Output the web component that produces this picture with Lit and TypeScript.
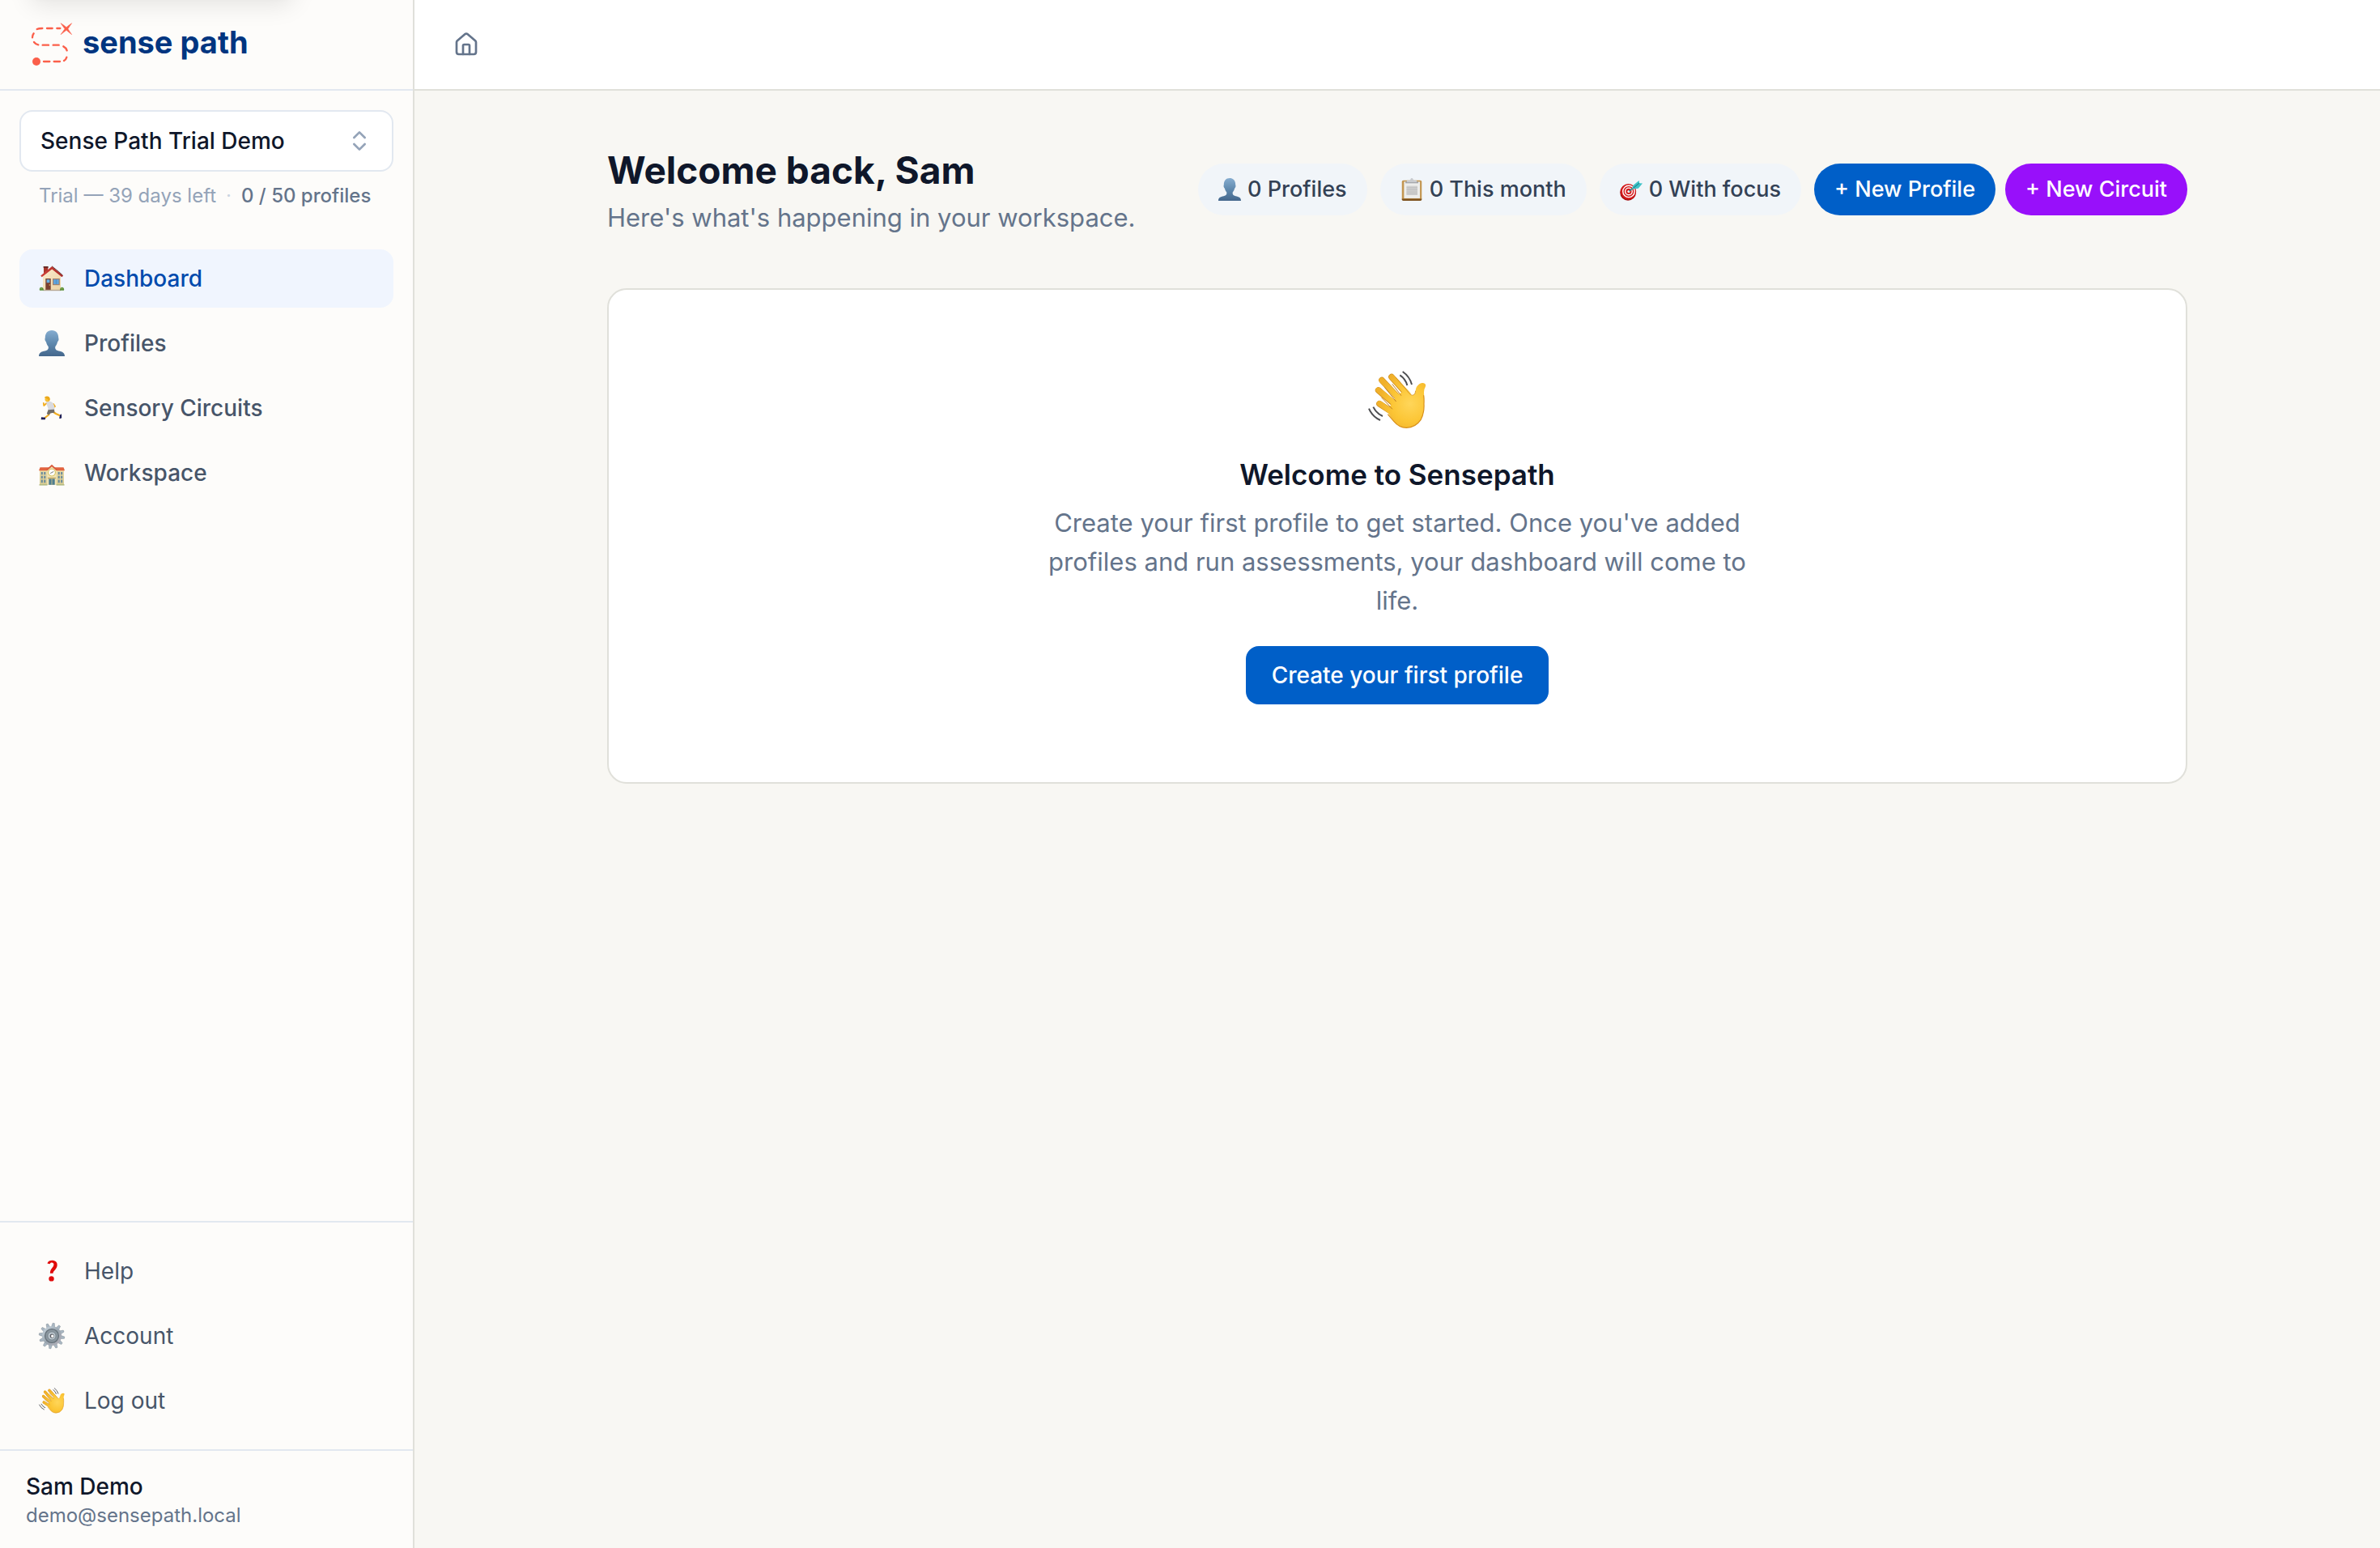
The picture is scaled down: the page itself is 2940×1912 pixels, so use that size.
import { LitElement, html, css, svg, nothing } from "lit";
import { customElement, property } from "lit/decorators.js";

const house = svg`
  <defs>
    <linearGradient id="wall" x1="0" y1="0" x2="1" y2="1"><stop offset="0" stop-color="#fbeccd"/><stop offset="1" stop-color="#ecd3a6"/></linearGradient>
    <linearGradient id="roof" x1="0" y1="0" x2="1" y2="0"><stop offset="0" stop-color="#cf4038"/><stop offset="1" stop-color="#a92a26"/></linearGradient>
  </defs>
  <path d="M6 1.500h5.300v4L6 10z" fill="#a8362c"/><path d="M5.600 1h6v1.700h-6z" fill="#5d2723"/>
  <path d="M16.200 3.500 5 13v17h22V13z" fill="url(#wall)"/>
  <path d="M16.200 1 2.200 12.500l1.500 1.700L16.200 4.600l12.300 9.600 1.500-1.700z" fill="url(#roof)"/>
  <path d="M16.200 .8 24.500 7.500 29.500 12" stroke="#4c2522" stroke-width=".8" fill="none"/>
  <rect x="8.300" y="16" width="6.400" height="14" fill="#7a4030"/><rect x="9.600" y="17.200" width="3.800" height="4" fill="#67aee0"/>
  <circle cx="13.300" cy="24" r=".7" fill="#e7c15c"/>
  <rect x="17" y="16" width="8.800" height="8.200" fill="#a57f66"/><rect x="18.100" y="17.100" width="6.600" height="6" fill="#5fa4dd"/>
  <path d="M21.400 17.100v6" stroke="#4b7fb2" stroke-width=".6"/>
  <rect x="5.500" y="29.800" width="21.500" height="1.400" fill="#b7a894"/>
  <path d="M1 30.800c-.8-2 .3-4 2-4 1.800 0 3 1.600 3 4zM26 30.800c0-2.400 1-4 2.700-4s3 2 2.300 4z" fill="#5d8f3a"/>
  <circle cx="2.800" cy="28.300" r=".9" fill="#86b455"/><circle cx="28.500" cy="28.300" r=".9" fill="#86b455"/>`;

const person = svg`
  <defs><linearGradient id="bust" x1="0" y1="0" x2="0" y2="1"><stop offset="0" stop-color="#86add0"/><stop offset=".5" stop-color="#5f89ae"/><stop offset="1" stop-color="#44678c"/></linearGradient></defs>
  <path d="M16 0c5.400 0 8.200 3.900 8.200 9 0 .9.500 1.400.300 2.600-.2 1.500-1 2.200-1.500 2.900-.6 2.700-1.600 4.100-2.700 5.400-.5 2.400.2 4.100 2.700 5 4 1.300 9 1.300 9 7.100H0c0-5.800 5-5.800 9-7.100 2.500-.9 3.200-2.600 2.700-5-1.100-1.300-2.100-2.700-2.700-5.400-.5-.7-1.300-1.400-1.500-2.900-.2-1.200.3-1.700.3-2.600C7.800 3.900 10.600 0 16 0z" fill="url(#bust)"/>`;

const runner = svg`
  <g fill="none" stroke-linecap="round" stroke-linejoin="round">
    <path d="M9.500 10 6.200 13 5.800 10M18 11l2 3-2.500 1.600" stroke="#f2ae22" stroke-width="1.800"/>
    <path d="M13.500 21 12 24.500 7.500 28M17.500 20.500 21 23l5.500 2.500" stroke="#f2ae22" stroke-width="2.200"/>
  </g>
  <path d="M3 27.200l5.200.6-.4 2.500H2.700zM26.200 24.500l1.800-1.200.2 5-2.400.9-.6-1z" fill="#1f2059"/>
  <path d="M12 17l7 .3.400 4.400-2.800.2-2.200.6-2.300 2-2.300-1.600z" fill="#706c68"/>
  <path d="M9 8.600c2.200-1.300 5.500-1 7.500.4 2 2 3 4.500 2.900 8.600l-7.400.7c-.6-2.600-2-5-3-9.700z" fill="#d9dadf"/>
  <circle cx="10.500" cy="5.200" r="3" fill="#f7bf37"/><path d="M6.800 3.200C8 .9 12.500 1.200 13.400 3.500c.6 1.800 0 3.300-1 4-.2-2.300-2.200-3.300-5.600-4.300z" fill="#eba819"/>`;

const school = svg`
  <defs><linearGradient id="brick" x1="0" y1="0" x2="0" y2="1"><stop offset="0" stop-color="#eadba6"/><stop offset="1" stop-color="#d8cc93"/></linearGradient></defs>
  <rect x="1" y="12.500" width="30" height="18" fill="url(#brick)"/>
  <path d="M1.500 9.300h29L32 13.300H0z" fill="#e2643f"/>
  <path d="M10.200 13 16 7.500 21.800 13v17.500H10.200z" fill="#f0e3b4"/><path d="M16 5.800 9.200 12l1.200 1.300L16 8.300l5.600 5L22.800 12z" fill="#d95a3b"/>
  <circle cx="16" cy="15.600" r="4.900" fill="#d6c25e"/><circle cx="16" cy="15.600" r="3.800" fill="#fff"/><path d="M16 15.600l2.300-1.200M16 15.600l-1.800 1" stroke="#555" stroke-width=".8"/>
  <path d="M2.800 15h2v3.200h-2zM6.300 15h2v3.200h-2zM23.700 15h2v3.200h-2zM27.200 15h2v3.200h-2zM2.800 19.800h2V23h-2zM6.300 19.800h2V23h-2zM23.700 19.800h2V23h-2zM27.200 19.800h2V23h-2zM2.800 24.600h2v3.600h-2zM6.300 24.600h2v3.600h-2zM23.700 24.600h2v3.600h-2zM27.200 24.600h2v3.600h-2z" fill="#65889c"/>
  <rect x="11" y="21.800" width="10" height="1.400" fill="#c2a55c"/><rect x="12.300" y="23.400" width="7.400" height="7.400" fill="#4f7d8f"/><path d="M16 23.400v7.400" stroke="#d9cb92" stroke-width=".8"/>
  <path d="M0.500 30.200h10v1.200h-10zM21.500 30.200h10v1.200h-10z" fill="#a3ad6b"/>`;

const question = svg`
  <path d="M10.400 6.500c1-3.300 4.200-4 6.800-3.700 3.800.4 6 2.900 5.400 6.600-.4 2.600-2 4.300-3.500 6-1 1.200-1.500 2-1.600 3.400h-3.600c-.1-2.600.6-4.200 2-6 1.300-1.700 2.400-2.800 2.500-4.700.1-1.600-.8-2.500-2.400-2.500-1.300 0-2 .5-2.500 1.600z" fill="#e00a0a"/>
  <circle cx="15.500" cy="25.400" r="3.200" fill="#e00a0a"/>`;

const teeth = Array.from({ length: 12 }, (_, i) => i * 30 + 8);
const gear = svg`
  <defs><linearGradient id="steel" x1="0" y1="0" x2="1" y2="1"><stop offset="0" stop-color="#cfdbe4"/><stop offset=".5" stop-color="#9aa6b0"/><stop offset="1" stop-color="#b5afb8"/></linearGradient></defs>
  ${teeth.map((a) => svg`<path d="M13.700 6l1.200-5.800h2.200l1.200 5.800z" fill="#a9b7c3" stroke="#75808a" stroke-width=".4" transform="rotate(${a} 16 16)"/>`)}
  <circle cx="16" cy="16" r="12" fill="url(#steel)"/>
  <circle cx="16" cy="16" r="8.400" fill="#8a969f" stroke="#67727b" stroke-width="1.400"/>
  <circle cx="16" cy="16" r="5" fill="#bcc7cf" stroke="#727d86" stroke-width=".8"/>
  <circle cx="16.200" cy="16" r="2.600" fill="#5a5c62"/><circle cx="16.700" cy="16.200" r="1.700" fill="#fafafa"/>`;

const wave = svg`
  <defs>
    <radialGradient id="palm" gradientUnits="userSpaceOnUse" cx="245" cy="205" r="120"><stop offset="0" stop-color="#ffd65a"/><stop offset=".55" stop-color="#fcc636"/><stop offset="1" stop-color="#f0b02a"/></radialGradient>
  </defs>
  <g fill="none" stroke="#d1901f" stroke-width="23" stroke-linecap="round"><path d="M177 107 236 172M141 119 202 184M128 156 186 206M132 206 184 240"/></g>
  <path d="M166 238 172 214 186 190 212 164 232 158Q248 178 258 174 266 170 266 158 267 142 280 133 292 126 301 132 305 137 302 144 297 152 297 164 298 172 297 206 299 240 285 266 266 294 232 295 205 295 186 272 174 256 162 236z" fill="url(#palm)"/>
  <g fill="none" stroke="url(#palm)" stroke-width="20" stroke-linecap="round"><path d="M178 107 238 172M141 119 206 188M128 155 192 208M132 205 190 246"/></g>
  <g fill="none" stroke="#c07f22" stroke-width="3" stroke-linecap="round"><path d="M180 134 212 175M152 146 193 197M140 183 179 225"/></g>
  <path d="M192 108 234 157Q248 178 258 174 266 170 266 158" fill="none" stroke="#d2921e" stroke-width="2.500"/>
  <path d="M296 176Q298 190 297 206 299 240 285 266 266 294 232 295 205 295 186 272L164 246" fill="none" stroke="#d8901c" stroke-width="3.500" stroke-linecap="round"/>
  <g fill="none" stroke="#4e4f52" stroke-width="6"><path d="M218 87Q244 105 252 135M208 100Q229 114 235 138M93 224Q106 254 135 267M109 218Q121 242 144 252"/></g>`;

const clipboard = svg`
  <rect x="2" y="3" width="28" height="28.500" rx="2" fill="#c39651"/><path d="M2 29h28v1a2 2 0 0 1-2 2H4a2 2 0 0 1-2-2z" fill="#7e5320"/>
  <rect x="5" y="5" width="22.500" height="23.500" fill="#ededeb"/><path d="M7 5h18v2.200H7z" fill="#9a9da2"/>
  <path d="M12.500 3c1 0 1.500-.8 1.700-1.600a1.900 1.900 0 0 1 3.600 0c.2.800.7 1.600 1.700 1.600h3.500v3H9V3z" fill="#c9cbce"/>
  <rect x="8.500" y="11" width="15.500" height="13" fill="#cfcfcf"/><path d="M8.500 13.500H24M8.500 16.500H24M8.500 19.500H24M8.500 22H24" stroke="#b5b5b5" stroke-width=".7"/>`;

const target = svg`
  <circle cx="11.500" cy="20.400" r="11.300" fill="#a30d10"/><circle cx="12" cy="19" r="11" fill="#d41a1c"/>
  <circle cx="12.500" cy="18.800" r="8.200" fill="none" stroke="#fff" stroke-width="1.600"/><circle cx="12.500" cy="18.800" r="4.900" fill="none" stroke="#fff" stroke-width="1.600"/><circle cx="12.500" cy="18.800" r="1.800" fill="#fff"/>
  <path d="M13 18.500 24 10" stroke="#2a8891" stroke-width="1.800"/><path d="M17 15.500l2-5.500 8-6.500 .5 3.500 4.500.500-6 7z" fill="#3fc3c8"/><path d="M19 14 27.500 7" stroke="#1b8790" stroke-width="1.200"/>`;

const logo = svg`
  <g fill="none" stroke="#fb5f4a" stroke-width="7" stroke-linecap="round">
    <path d="M72 168h22M110 168h22M147 165q8-5 10-13M145 112q10 5 13 15M128 107h-21M90 107h-22M52 106q-10-2-16-10M30 79q0-9 5-15M47 48q6-3 20-3M84 45h20M121 45h12"/>
  </g>
  <circle cx="45" cy="168" r="15" fill="#fb5f4a"/>
  <path d="M135 26q12 7 21 15 9-8 20-15-8 11-14 21 6 10 14 21-11-8-20-16-10 8-21 16 8-11 15-21-7-10-15-21z" fill="#fb5f4a" stroke="#fb5f4a" stroke-width="1.500"/>`;

const boxes: Record<string, string> = { wave: "90 84 216 216", logo: "0 0 210 210" };
const art: Record<string, unknown> = { house, person, runner, school, question, gear, wave, clipboard, target, logo };

@customElement("sp-art")
export class SpArt extends LitElement {
  @property() name = "";
  static styles = css`
    :host { display: block; flex: none; width: 32px; height: 32px; }
    .art { display: block; width: 100%; height: 100%; overflow: visible; }
  `;
  render() {
    return html`<svg class="art" viewBox=${boxes[this.name] ?? "0 0 32 32"} aria-hidden="true">${art[this.name] ?? nothing}</svg>`;
  }
}

interface NavItem { label: string; icon: string; active?: boolean; }

const primary: NavItem[] = [
  { label: "Dashboard", icon: "house", active: true },
  { label: "Profiles", icon: "person" },
  { label: "Sensory Circuits", icon: "runner" },
  { label: "Workspace", icon: "school" },
];
const secondary: NavItem[] = [
  { label: "Help", icon: "question" },
  { label: "Account", icon: "gear" },
  { label: "Log out", icon: "wave" },
];
const stats = [
  { label: "0 Profiles", icon: "person" },
  { label: "0 This month", icon: "clipboard" },
  { label: "0 With focus", icon: "target" },
];

@customElement("app-root")
export class AppRoot extends LitElement {
  static styles = css`
    :host {
      display: flex;
      min-height: 100vh;
      box-sizing: border-box;
      font-family: Inter, "Liberation Sans", sans-serif;
      font-size: 28px;
      line-height: 40px;
      color: #0f172a;
      background: #f8f7f3;
    }
    * { box-sizing: border-box; }
    h1, h2, p { margin: 0; }
    a { color: inherit; text-decoration: none; }
    button, select { font: inherit; color: inherit; }

    .sidebar {
      position: relative;
      display: flex;
      flex-direction: column;
      flex: none;
      width: 512px;
      background: #fdfcfa;
      border-right: 2px solid #e0e0da;
      overflow: hidden;
    }
    .sidebar::before {
      content: "";
      position: absolute;
      top: -80px;
      left: 32px;
      width: 336px;
      height: 72px;
      border-radius: 16px;
      box-shadow: 0 20px 30px -6px rgb(0 0 0 / 10%), 0 8px 12px -8px rgb(0 0 0 / 10%);
    }
    .brand {
      display: flex;
      align-items: center;
      gap: 2px;
      height: 112px;
      padding: 0 30px;
      border-bottom: 2px solid #e2e8f0;
    }
    .brand-mark { width: 70px; height: 70px; }
    .brand-name { padding-bottom: 6px; font-size: 38px; line-height: 48px; font-weight: 700; color: #003580; }

    .workspace { padding: 24px 24px 50px; }
    .picker { display: grid; align-items: center; }
    .picker-select {
      grid-area: 1 / 1;
      width: 100%;
      height: 76px;
      padding: 0 72px 0 24px;
      appearance: none;
      border: 2px solid #e2e8f0;
      border-radius: 16px;
      background: #fff;
      font-weight: 500;
    }
    .picker-icon { grid-area: 1 / 1; justify-self: end; margin-right: 26px; width: 32px; height: 32px; pointer-events: none; color: #94a3b8; }
    .line { fill: none; stroke: currentColor; stroke-width: 2; stroke-linecap: round; stroke-linejoin: round; }
    .plan { display: flex; gap: 12px; margin-top: 14px; padding: 0 24px; font-size: 24px; line-height: 32px; color: #94a3b8; white-space: nowrap; }
    .dot { color: #cbd5e1; }
    .usage { font-weight: 500; color: #64748b; }

    .nav { display: flex; flex-direction: column; gap: 8px; padding: 0 24px; }
    .nav.fill { flex: 1; }
    .nav.foot { padding: 24px; border-top: 2px solid #e2e8f0; }
    .item {
      display: flex;
      align-items: center;
      gap: 24px;
      padding: 16px 24px;
      border-radius: 16px;
      font-weight: 500;
      color: #475569;
    }
    .foot .item { font-weight: 400; }
    .item.active { background: #f0f5fe; color: #004aad; }
    .user { padding: 24px 32px; border-top: 2px solid #e2e8f0; }
    .user-name { font-weight: 500; }
    .user-mail { font-size: 24px; line-height: 32px; color: #64748b; }

    .page { flex: 1; min-width: 0; }
    .topbar { display: flex; align-items: center; height: 112px; padding: 0 48px; background: #fff; border-bottom: 2px solid #e0e0da; }
    .home { display: block; color: #64748b; }
    .home-icon { display: block; width: 32px; height: 32px; }
    .content { max-width: 2048px; margin: 0 auto; padding: 64px 48px; }
    .hero { display: flex; align-items: center; justify-content: space-between; gap: 32px; margin-bottom: 64px; }
    .title { padding-top: 2px; font-size: 46px; line-height: 64px; font-weight: 700; }
    .lead { margin-top: 4px; font-size: 31px; line-height: 46px; color: #64748b; }
    .actions { display: flex; align-items: center; gap: 16px; white-space: nowrap; }
    .buttons { display: flex; gap: 12px; }
    .pill { display: flex; align-items: center; gap: 8px; height: 64px; padding: 0 25px; border: 0; border-radius: 32px; font-size: 27px; font-weight: 500; background: #f1f5f9; color: #334155; }
    .pill-icon { width: 28px; height: 28px; }
    .pill.blue { background: #005fc8; color: #fff; }
    .pill.purple { background: #9810fa; color: #fff; }

    .card {
      display: flex;
      flex-direction: column;
      align-items: center;
      padding: 96px;
      border: 2px solid #e0e0da;
      border-radius: 24px;
      background: #fff;
      text-align: center;
    }
    .card-icon { width: 72px; height: 72px; margin: 4px 0; }
    .card-title { margin-top: 24px; font-size: 35px; line-height: 56px; font-weight: 600; }
    .card-text { max-width: 880px; margin-top: 8px; font-size: 31px; line-height: 48px; color: #64748b; }
    .cta { height: 72px; margin-top: 32px; padding: 0 32px; border: 0; border-radius: 16px; background: #005fc8; color: #fff; font-weight: 500; }
  `;

  private item(i: NavItem) {
    return html`<a class="item ${i.active ? "active" : ""}" href="#" aria-current=${i.active ? "page" : nothing}>
      <sp-art name=${i.icon}></sp-art>${i.label}
    </a>`;
  }

  render() {
    return html`
      <aside class="sidebar">
        <a class="brand" href="#"><sp-art class="brand-mark" name="logo"></sp-art><span class="brand-name">sense path</span></a>
        <div class="workspace">
          <div class="picker">
            <select class="picker-select" aria-label="Workspace"><option>Sense Path Trial Demo</option></select>
            <svg class="picker-icon line" viewBox="0 0 24 24" aria-hidden="true"><path d="m7 15 5 5 5-5M7 9l5-5 5 5"/></svg>
          </div>
          <p class="plan"><span>Trial — 39 days left</span><span class="dot">·</span><span class="usage">0 / 50 profiles</span></p>
        </div>
        <nav class="nav fill" aria-label="Main">${primary.map((i) => this.item(i))}</nav>
        <nav class="nav foot" aria-label="Support">${secondary.map((i) => this.item(i))}</nav>
        <div class="user">
          <div class="user-name">Sam Demo</div>
          <div class="user-mail">demo@sensepath.local</div>
        </div>
      </aside>
      <div class="page">
        <header class="topbar">
          <a class="home" href="#" aria-label="Home">
            <svg class="home-icon line" viewBox="0 0 24 24" aria-hidden="true">
              <path d="M15 21v-8a1 1 0 0 0-1-1h-4a1 1 0 0 0-1 1v8"/>
              <path d="M3 10a2 2 0 0 1 .709-1.528l7-5.999a2 2 0 0 1 2.582 0l7 5.999A2 2 0 0 1 21 10v9a2 2 0 0 1-2 2H5a2 2 0 0 1-2-2z"/>
            </svg>
          </a>
        </header>
        <main class="content">
          <div class="hero">
            <div>
              <h1 class="title">Welcome back, Sam</h1>
              <p class="lead">Here's what's happening in your workspace.</p>
            </div>
            <div class="actions">
              ${stats.map((s) => html`<span class="pill"><sp-art class="pill-icon" name=${s.icon}></sp-art>${s.label}</span>`)}
              <div class="buttons">
                <button class="pill blue">+ New Profile</button>
                <button class="pill purple">+ New Circuit</button>
              </div>
            </div>
          </div>
          <section class="card">
            <sp-art class="card-icon" name="wave"></sp-art>
            <h2 class="card-title">Welcome to Sensepath</h2>
            <p class="card-text">Create your first profile to get started. Once you've added profiles and run assessments, your dashboard will come to life.</p>
            <button class="cta">Create your first profile</button>
          </section>
        </main>
      </div>
    `;
  }
}
